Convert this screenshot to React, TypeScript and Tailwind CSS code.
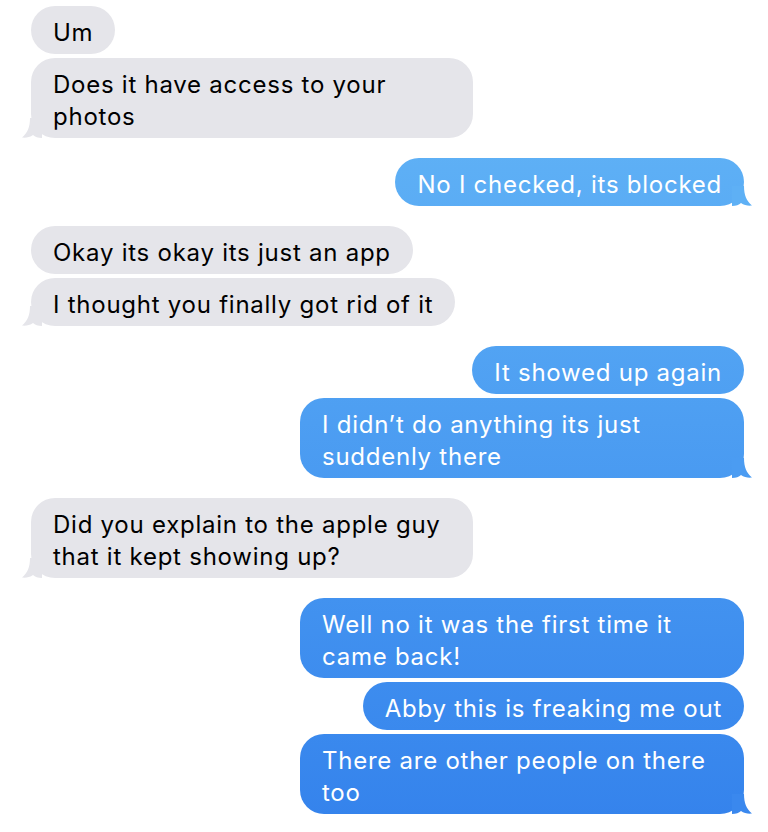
import React from "react";

type Msg = { lines: string[]; me: boolean; tail?: boolean; first?: boolean };

const msgs: Msg[] = [
  { lines: ["Um"], me: false, first: true },
  { lines: ["Does it have access to your", "photos"], me: false, tail: true },
  { lines: ["No I checked, its blocked"], me: true, tail: true, first: true },
  { lines: ["Okay its okay its just an app"], me: false, first: true },
  { lines: ["I thought you finally got rid of it"], me: false, tail: true },
  { lines: ["It showed up again"], me: true, first: true },
  { lines: ["I didn\u2019t do anything its just", "suddenly there"], me: true, tail: true },
  { lines: ["Did you explain to the apple guy", "that it kept showing up?"], me: false, tail: true, first: true },
  { lines: ["Well no it was the first time it", "came back!"], me: true, first: true },
  { lines: ["Abby this is freaking me out"], me: true },
  { lines: ["There are other people on there", "too"], me: true, tail: true },
];

function LeftTail() {
  return (
    <svg
      className="absolute bottom-0 left-[-9px] h-[20px] w-[20px]"
      viewBox="0 0 20 20"
      aria-hidden
    >
      <path
        d="M20,20 L20,0 L8,0 C8,9 5.5,15 0,19.6 C4,20.2 8,19 11,17 C13,19 16,20 20,20 Z"
        fill="#e5e5ea"
      />
    </svg>
  );
}

function RightTail({ color }: { color: string }) {
  return (
    <svg
      className="absolute bottom-0 right-[-8px] h-[20px] w-[20px]"
      viewBox="0 0 20 20"
      aria-hidden
    >
      <path
        d="M0,20 L0,0 L12,0 C12,9 14.5,15 20,19.6 C16,20.2 12,19 9,17 C7,19 4,20 0,20 Z"
        fill={color}
      />
    </svg>
  );
}

export default function App() {
  return (
    <div
      className="min-h-[832px] w-[768px] bg-white pl-[31px] pr-[24px] pt-[6px]"
      style={{ fontFamily: "Inter, 'Noto Sans', sans-serif" }}
    >
      <div className="flex flex-col">
        {msgs.map((m, i) => {
          const multi = m.lines.length > 1;
          return (
            <div
              key={i}
              className={`flex ${m.me ? "justify-end" : "justify-start"} ${
                i === 0 ? "" : m.first ? "mt-[20px]" : "mt-[4px]"
              }`}
            >
              <div
                className={`relative rounded-[24px] px-[22px] pt-[11px] pb-[5px] text-[24px] leading-[32px] tracking-[0.75px] ${
                  multi ? (m.me ? "w-[444px]" : "w-[442px]") : "w-fit"
                } ${
                  m.me
                    ? "bg-fixed bg-linear-to-b from-[#68baf7] to-[#3482ec] text-white"
                    : "bg-[#e5e5ea] text-black"
                }`}
              >
                {m.lines.map((l, j) => (
                  <div key={j} className="whitespace-nowrap">
                    {l}
                  </div>
                ))}
                {m.tail &&
                  (m.me ? (
                    <RightTail color={i > 8 ? "#3a88ee" : i > 5 ? "#4b9cf2" : "#5eb0f5"} />
                  ) : (
                    <LeftTail />
                  ))}
              </div>
            </div>
          );
        })}
      </div>
    </div>
  );
}
